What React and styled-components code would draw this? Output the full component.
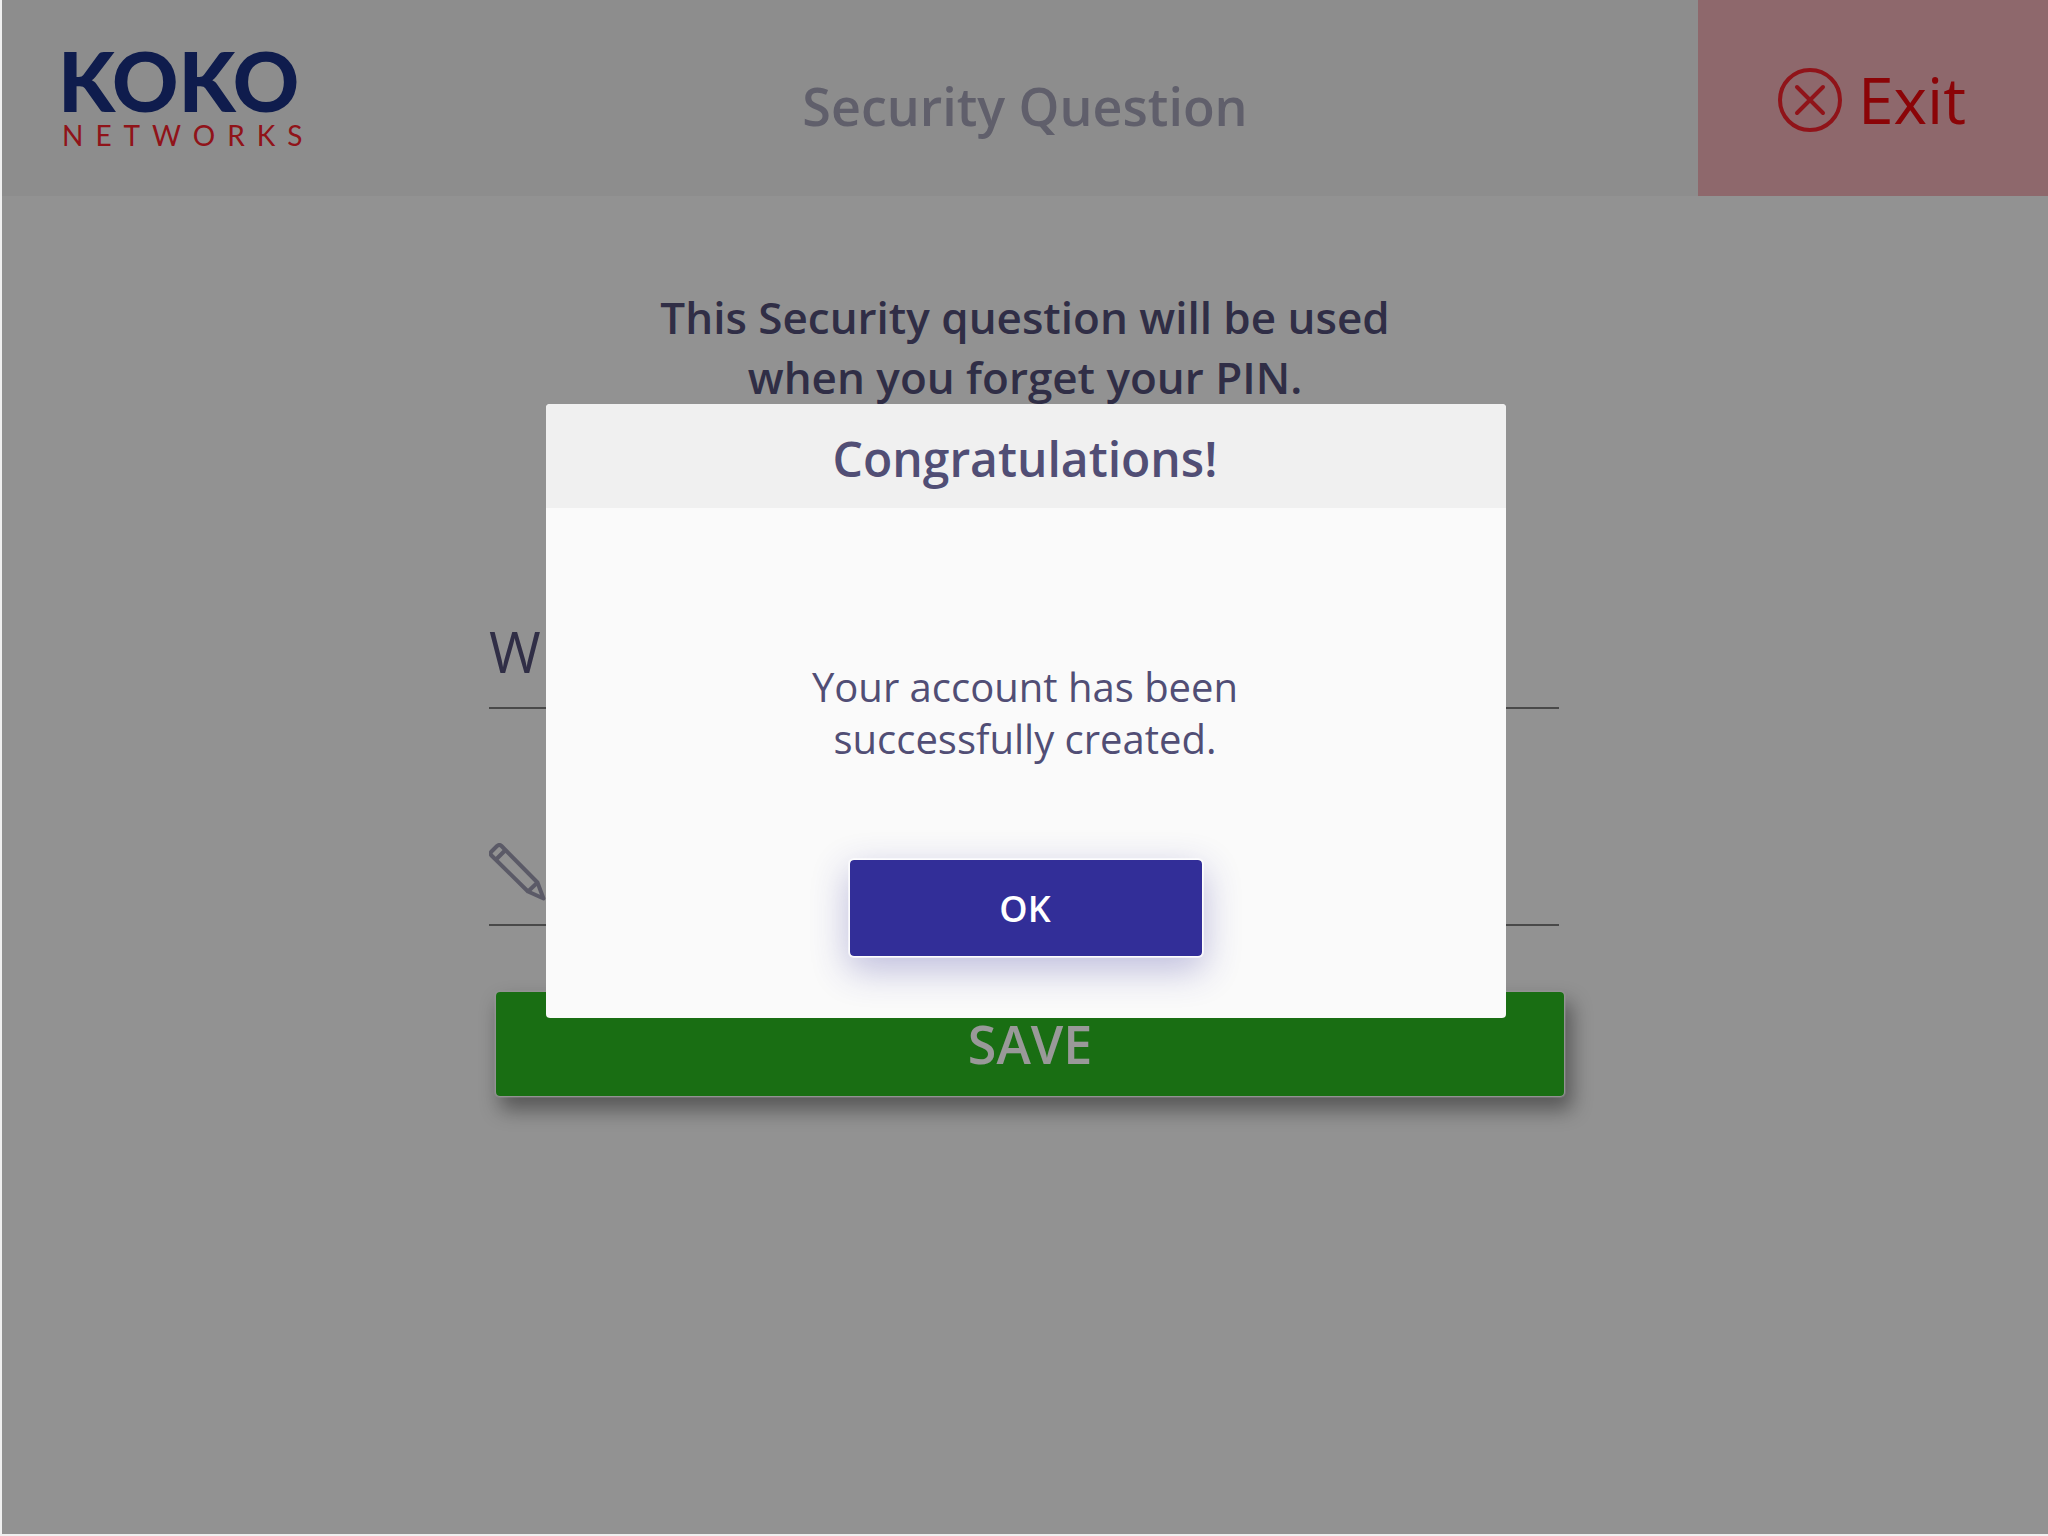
import React from "react";
import styled, { createGlobalStyle } from "styled-components";

const GlobalStyle = createGlobalStyle`
  *, *::before, *::after { box-sizing: border-box; }
  body {
    margin: 0;
    background: #f0f0f0;
    font-family: "Open Sans", "Noto Sans", sans-serif;
    color: #514e75;
  }
  button, input { font: inherit; color: inherit; }
`;

const Frame = styled.div`
  display: flex;
  min-height: 100vh;
  padding: 0 0 2px 2px;
`;

const Screen = styled.div`
  position: relative;
  flex: 1;
  background: #f3f3f3;
`;

const Header = styled.header`
  display: grid;
  grid-template-columns: 1fr auto 1fr;
  height: 196px;
  background: #ebebeb;
`;

const Logo = styled.div`
  align-self: start;
  padding: 50px 0 0 56px;
  font-family: Lato, sans-serif;
`;

const LogoName = styled.div`
  font-size: 82px;
  font-weight: 900;
  line-height: 60px;
  color: #193080;
`;

const LogoTag = styled.div`
  padding: 10px 0 0 4px;
  font-size: 28px;
  line-height: 30px;
  letter-spacing: 12px;
  color: #f1202a;
`;

const Title = styled.h1`
  align-self: center;
  margin: 0;
  padding-top: 16px;
  font-size: 52px;
  font-weight: 600;
  line-height: 72px;
  color: #a09fb2;
`;

const ExitButton = styled.button`
  justify-self: end;
  display: flex;
  align-items: center;
  justify-content: center;
  gap: 16px;
  width: 350px;
  padding: 4px 2px 0 0;
  border: 0;
  background: #edadb4;
  color: #e8080d;
  font-size: 64px;
  line-height: 88px;
`;

const Main = styled.main`
  width: 1072px;
  max-width: 100%;
  margin: 0 auto;
  padding-top: 91px;
`;

const Intro = styled.p`
  width: 800px;
  max-width: 100%;
  margin: 0 auto 192px;
  text-align: center;
  font-size: 44px;
  font-weight: 600;
  line-height: 60px;
`;

const Field = styled.label`
  display: flex;
  align-items: center;
  height: 110px;
  margin: 0 2px ${(p) => p.$gap}px 0;
  padding: ${(p) => p.$drop || 0}px 0 ${(p) => p.$lift || 0}px;
  border-bottom: 2px solid #7a7a7a;
`;

const FieldInput = styled.input`
  flex: 1;
  min-width: 0;
  padding: 0;
  border: 0;
  outline: 0;
  background: transparent;
  font-size: 56px;
  line-height: 76px;
`;

const SaveButton = styled.button`
  display: block;
  width: 100%;
  height: 108px;
  margin-left: 5px;
  border: 2px solid rgba(255, 255, 255, 0.3);
  border-radius: 6px;
  background: #2ab821;
  background-clip: padding-box;
  box-shadow: 6px 12px 20px rgba(0, 0, 0, 0.4);
  color: #ffffff;
  font-size: 52px;
  font-weight: 600;
  line-height: 72px;
`;

const Overlay = styled.div`
  position: absolute;
  inset: 0;
  display: flex;
  align-items: center;
  justify-content: center;
  padding: 0 0 112px 2px;
  background: rgba(0, 0, 0, 0.4);
`;

const Dialog = styled.section`
  width: 960px;
  max-width: 100%;
  border-radius: 4px;
  overflow: hidden;
  background: #fafafa;
`;

const DialogTitle = styled.h2`
  margin: 0;
  padding: 22px 2px 16px 0;
  background: #f0f0f0;
  text-align: center;
  font-size: 48px;
  font-weight: 600;
  line-height: 66px;
`;

const DialogBody = styled.div`
  display: flex;
  flex-direction: column;
  align-items: center;
  gap: 93px;
  padding: 153px 0 60px;
`;

const Message = styled.p`
  width: 480px;
  margin: 0;
  padding-right: 2px;
  text-align: center;
  font-size: 40px;
  line-height: 52px;
`;

const OkButton = styled.button`
  width: 356px;
  height: 100px;
  padding: 2px 2px 0 0;
  border: 2px solid rgba(255, 255, 255, 0.65);
  border-radius: 6px;
  background: #322e98;
  background-clip: padding-box;
  box-shadow: 0 12px 36px rgba(50, 46, 152, 0.3);
  color: #ffffff;
  font-size: 36px;
  font-weight: 600;
  line-height: 48px;
`;

function ExitIcon() {
  return (
    <svg width="64" height="64" viewBox="0 0 64 64" fill="none" stroke="#f0202a" strokeWidth="4" strokeLinecap="round" aria-hidden="true">
      <circle cx="32" cy="32" r="30" />
      <path d="M19 19 45 45M45 19 19 45" />
    </svg>
  );
}

function PencilIcon() {
  return (
    <svg width="58" height="58" viewBox="0 0 58 58" fill="none" stroke="#9897ac" strokeWidth="4" strokeLinejoin="round" aria-hidden="true">
      <path d="M8 3 2.500 8.500Q0.500 10.500 2.500 12.500L39 48.500 54.500 55.500 48.500 39.500 12.500 3Q10.500 1 8 3Z" />
      <path d="M16 7.500 7.500 16M48.500 39.500 39 48.500" />
    </svg>
  );
}

export default function App() {
  return (
    <>
      <GlobalStyle />
      <Frame>
        <Screen>
          <Header>
            <Logo>
              <LogoName>KOKO</LogoName>
              <LogoTag>NETWORKS</LogoTag>
            </Logo>
            <Title>Security Question</Title>
            <ExitButton type="button">
              <ExitIcon />
              Exit
            </ExitButton>
          </Header>
          <Main>
            <Intro>This Security question will be used when you forget your PIN.</Intro>
            <Field $gap={107} $lift={4}>
              <FieldInput type="text" defaultValue="W" aria-label="Security question" />
            </Field>
            <Field $gap={64} $drop={4}>
              <PencilIcon />
              <FieldInput type="text" aria-label="Answer" />
            </Field>
            <SaveButton type="button">SAVE</SaveButton>
          </Main>
          <Overlay>
            <Dialog role="dialog" aria-modal="true" aria-labelledby="dialog-title">
              <DialogTitle id="dialog-title">Congratulations!</DialogTitle>
              <DialogBody>
                <Message>Your account has been successfully created.</Message>
                <OkButton type="button">OK</OkButton>
              </DialogBody>
            </Dialog>
          </Overlay>
        </Screen>
      </Frame>
    </>
  );
}
